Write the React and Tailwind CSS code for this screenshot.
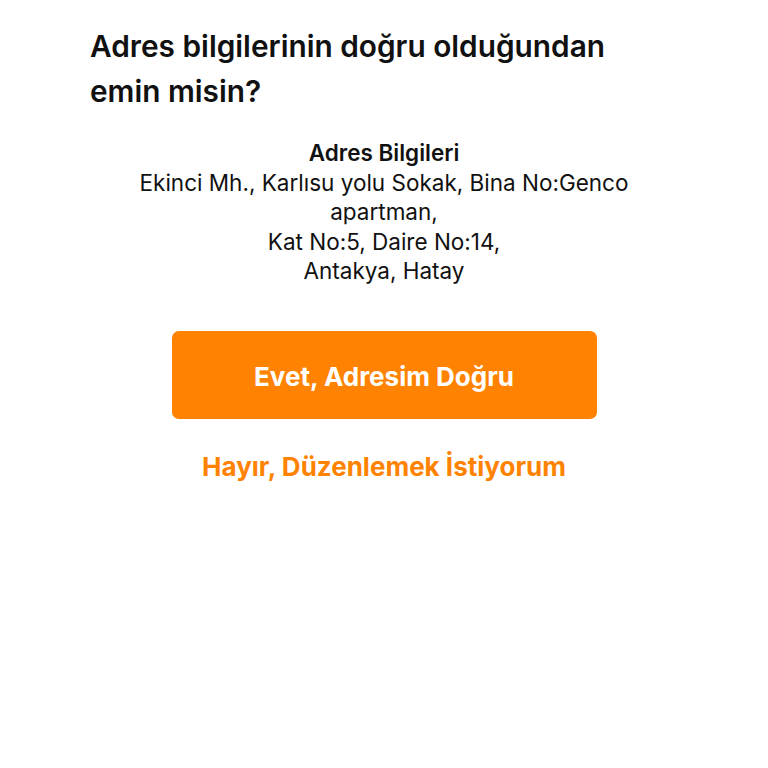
import React from 'react';

const address = {
  lines: [
    'Ekinci Mh., Karlısu yolu Sokak, Bina No:Genco apartman,',
    'Kat No:5, Daire No:14,',
    'Antakya, Hatay'
  ]
};

const App = () => {
  return (
    <div className="min-h-screen bg-white font-['Inter','Noto_Sans',sans-serif] text-[#111]">
      <div className="mx-auto w-[588px] pt-[24px]">
        {/* Title */}
        <h1 className="max-w-[570px] text-[29.8px] leading-[45px] font-semibold">
          Adres bilgilerinin doğru olduğundan emin misin?
        </h1>

        {/* Address */}
        <div className="mx-auto mt-[24px] w-[530px] text-center text-[22.5px] leading-[29.5px]">
          <p className="font-semibold">Adres Bilgileri</p>
          {address.lines.map((line, i) => (
            <p key={i}>{line}</p>
          ))}
        </div>

        {/* Actions */}
        <div className="mt-[45px] flex flex-col items-center">
          <button className="h-[88px] w-[425px] rounded-[7px] bg-[#ff8300] pt-[3px] text-[26px] font-bold text-white">
            Evet, Adresim Doğru
          </button>
          <button className="mt-[28px] text-[26px] font-bold text-[#ff8300]">
            Hayır, Düzenlemek İstiyorum
          </button>
        </div>
      </div>
    </div>
  );
};

export default App;
